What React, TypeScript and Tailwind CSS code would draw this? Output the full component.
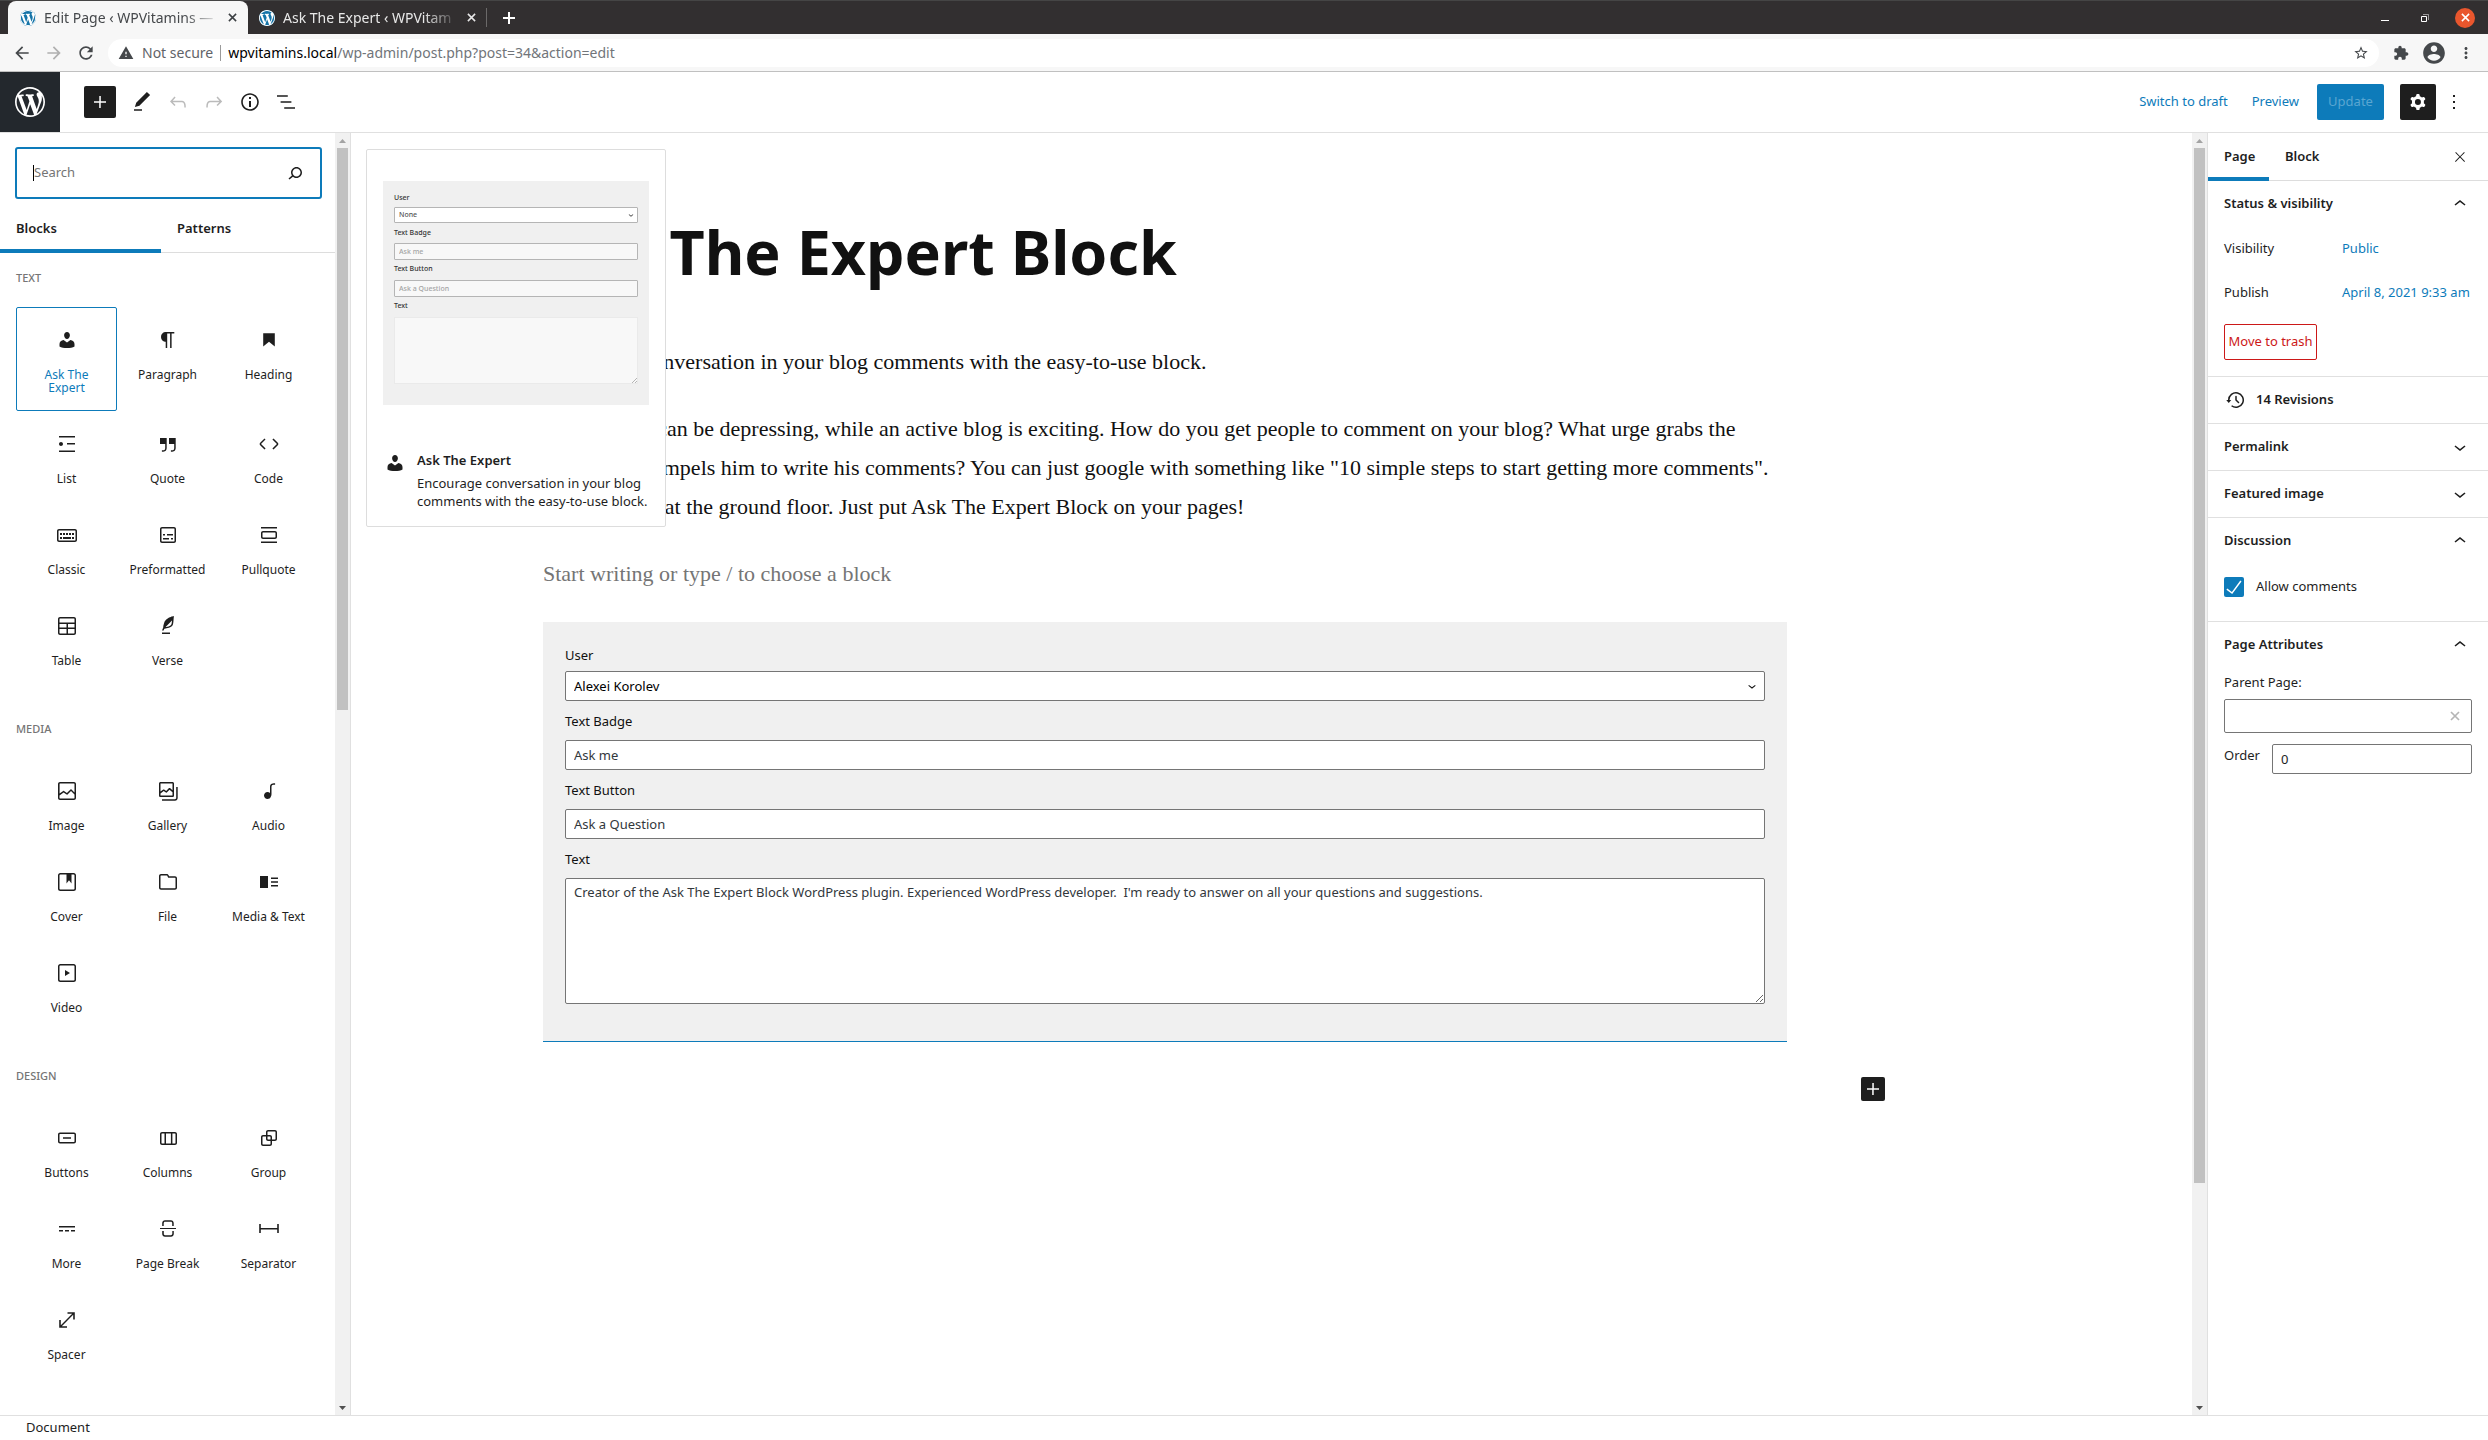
import React from "react";

const ICONS: Record<string, string> = {
  plus: "M18 11.2h-5.2V6h-1.5v5.2H6v1.5h5.2V18h1.5v-5.2H18z",
  edit: "M20.1 5.1L16.9 2 6.2 12.7l-1.3 4.4 4.5-1.3L20.1 5.1zM4 20.8h8v-1.5H4v1.5z",
  undo: "M18.3 11.7c-.6-.6-1.4-.9-2.3-.9H6.7l2.9-3.3-1.1-1-4.5 5L8.5 16l1-1-2.7-2.7H16c.5 0 .9.2 1.3.5 1 1 1 3.4 1 4.5v.3h1.5v-.2c0-1.5 0-4.3-1.5-5.7z",
  redo: "M15.6 6.5l-1.1 1 2.9 3.3H8c-.9 0-1.7.3-2.3.9-1.4 1.5-1.4 4.2-1.4 5.6v.2h1.5v-.3c0-1.1 0-3.5 1-4.5.3-.3.7-.5 1.3-.5h9.2L14.5 15l1.1 1.1 4.6-4.6-4.6-5z",
  info: "M12 3.2c-4.8 0-8.8 3.9-8.8 8.8 0 4.8 3.9 8.8 8.8 8.8 4.8 0 8.8-3.9 8.8-8.8 0-4.8-4-8.8-8.8-8.8zm0 16c-4 0-7.2-3.3-7.2-7.2C4.8 8 8 4.8 12 4.8s7.2 3.3 7.2 7.2c0 4-3.2 7.2-7.2 7.2zM11 17h2v-6h-2v6zm0-8h2V7h-2v2z",
  outline: "M13.8 5.2H3v1.5h10.8V5.2zm-3.6 12v1.5H21v-1.5H10.2zm7.2-6H6.6v1.5h10.8v-1.5z",
  expert: "M12 4c1.7 0 2.9 1.4 2.9 3.2S13.700 11 12 11s-2.900-2-2.900-3.800S10.300 4 12 4zM8.600 12.100L12 14.600l3.400-2.500c2.300.3 4.100 1.900 4.100 4v2.500c-1.700 1-4.500 1.500-7.500 1.500s-5.800-.5-7.500-1.500v-2.500c0-2.100 1.800-3.700 4.100-4z",
  paragraph: "M18.3 4H9.9v-.1l-.9.2c-2.3.4-4 2.4-4 4.800s1.700 4.400 4 4.800l.7.1V20h1.500V5.500h2.900V20h1.500V5.500h2.700V4z",
  heading: "M6.200 5.200v13.400l5.800-4.800 5.800 4.800V5.200z",
  list: "M4 4v1.500h16V4H4zm8 8.500h8V11h-8v1.500zM4 20h16v-1.500H4V20zm4-8c0-1.100-.9-2-2-2s-2 .9-2 2 .9 2 2 2 2-.9 2-2z",
  quote: "M13 6v6h5.200v4c0 .8-.2 1.400-.5 1.700-.6.6-1.600.6-2.500.5h-.3v1.500h.5c1 0 2.300-.1 3.300-1 .6-.6 1-1.600 1-2.800V6H13zm-9 6h5.200v4c0 .8-.2 1.400-.5 1.700-.6.6-1.600.6-2.500.5h-.3v1.500h.5c1 0 2.300-.1 3.300-1 .6-.6 1-1.600 1-2.800V6H4v6z",
  code: "M20.800 10.700l-4.300-4.300-1.100 1.100 4.300 4.300c.1.1.1.3 0 .4l-4.300 4.300 1.100 1.100 4.300-4.300c.7-.8.7-1.900 0-2.600zM4.200 11.800l4.300-4.300-1-1-4.300 4.300c-.7.7-.7 1.800 0 2.500l4.300 4.300 1.100-1.100-4.300-4.300c-.2-.1-.2-.3-.1-.4z",
  classic: "M20 6H4c-1.100 0-2 .9-2 2v9c0 1.100.9 2 2 2h16c1.100 0 2-.9 2-2V8c0-1.100-.9-2-2-2zm.5 11c0 .3-.2.5-.5.5H4c-.3 0-.5-.2-.5-.5V8c0-.3.2-.5.5-.5h16c.3 0 .5.2.5.5v9zM10 10H8v2h2v-2zm-5 2h2v-2H5v2zm8-2h-2v2h2v-2zm-5 6h8v-2H8v2zm6-4h2v-2h-2v2zm3 0h2v-2h-2v2zm0 4h2v-2h-2v2zM5 16h2v-2H5v2z",
  preformatted: "M18 4H6c-1.100 0-2 .9-2 2v12c0 1.100.9 2 2 2h12c1.100 0 2-.9 2-2V6c0-1.100-.9-2-2-2zm.5 14c0 .3-.2.5-.5.5H6c-.3 0-.5-.2-.5-.5V6c0-.3.2-.5.5-.5h12c.3 0 .5.2.5.5v12zM7 16.500h6V15H7v1.500zm4-4h6V11h-6v1.500zM9 11H7v1.500h2V11zm6 5.500h2V15h-2v1.500z",
  pullquote: "M18 8H6c-1.100 0-2 .9-2 2v4c0 1.100.9 2 2 2h12c1.100 0 2-.9 2-2v-4c0-1.100-.9-2-2-2zm.5 6c0 .3-.2.5-.5.5H6c-.3 0-.5-.2-.5-.5v-4c0-.3.2-.5.5-.5h12c.3 0 .5.2.5.5v4zM4 4v1.500h16V4H4zm0 16h16v-1.500H4V20z",
  table: "M19 3H5c-1.100 0-2 .9-2 2v14c0 1.100.9 2 2 2h14c1.100 0 2-.9 2-2V5c0-1.100-.9-2-2-2zM5 4.500h14c.3 0 .5.2.5.5v3.500h-15V5c0-.3.2-.5.5-.5zm8 5.500h6.500v3.500H13V10zm-1.500 3.500h-7V10h7v3.500zm-7 5.500v-4h7v4.500H5c-.3 0-.5-.2-.5-.5zm14.500.5h-6V15h6.500v4c0 .3-.2.5-.5.5z",
  verse: "M17.800 2l-.9.3c-.1 0-3.600 1-5.200 2.100C10 5.500 9.300 6.500 8.900 7.100c-.6.9-1.700 4.700-1.700 6.300l-.9 2.300c-.2.4 0 .8.4 1 .1 0 .2.1.3.1.3 0 .6-.2.7-.5l.6-1.500c.3 0 .7-.1 1.200-.2.7-.1 1.400-.3 2.200-.5.8-.2 1.600-.5 2.400-.8.7-.3 1.400-.7 1.900-1.200s.8-1.200 1-1.900c.2-.7.3-1.600.4-2.400.1-.8.1-1.700.2-2.500 0-.8.1-1.500.2-2.100V2zm-1.900 5.600c-.1.8-.2 1.500-.3 2.100-.2.6-.4 1-.6 1.300-.3.3-.8.6-1.400.9-.7.3-1.400.5-2.200.8-.6.2-1.300.3-1.800.4L15 7.500c.3-.3.6-.7 1-1.100 0 .4 0 .8-.1 1.200zM6 20h8v-1.500H6V20z",
  image: "M19 3H5c-1.100 0-2 .9-2 2v14c0 1.100.9 2 2 2h14c1.100 0 2-.9 2-2V5c0-1.100-.9-2-2-2zM5 4.500h14c.3 0 .5.2.5.5v8.400l-3-2.900c-.3-.3-.8-.3-1 0L11.900 14 9 12c-.3-.2-.6-.2-.8 0l-3.600 2.600V5c-.1-.3.1-.5.4-.5zm14 15H5c-.3 0-.5-.2-.5-.5v-2.400l4.100-3 3 1.900c.3.2.7.2.9-.1L16 12l3.500 3.400V19c0 .3-.2.5-.5.5z",
  gallery: "M20.200 8v11c0 .7-.6 1.200-1.200 1.200H6v1.500h13c1.500 0 2.700-1.200 2.700-2.700V8h-1.500zM16.400 3H4.600C3.700 3 3 3.700 3 4.600v11.800c0 .9.7 1.600 1.600 1.600h11.800c.9 0 1.600-.7 1.600-1.600V4.600c0-.9-.7-1.600-1.600-1.600zM4.600 4.500h11.800l.1.1v6.600l-2.500-2.100c-.3-.3-.7-.3-1 0L10.200 12 8.100 10.600c-.3-.2-.6-.2-.8 0l-2.800 2V4.600l.1-.1zm11.800 12H4.600l-.1-.1v-2l3.200-2.300 2.200 1.500c.3.200.6.2.9-.1l2.700-2.800 3 2.600v3.100l-.1.1z",
  audio: "M17.700 4.300c-1.200 0-2.800 0-3.800 1-.6.6-.9 1.500-.9 2.600V14c-.6-.6-1.500-1-2.500-1C8.600 13 7 14.600 7 16.500S8.600 20 10.500 20c1.500 0 2.800-1 3.300-2.300.5-.8.7-1.800.7-2.500V7.900c0-.7.2-1.200.5-1.600.6-.6 1.800-.6 2.800-.6h.3V4.300h-.4z",
  cover: "M18.700 3H5.300C4 3 3 4 3 5.300v13.400C3 20 4 21 5.300 21h13.400c1.300 0 2.300-1 2.300-2.300V5.300C21 4 20 3 18.700 3zm.8 15.700c0 .4-.4.8-.8.8H5.300c-.4 0-.8-.4-.8-.8V5.300c0-.4.4-.8.8-.8h6.200v8.900l2.500-3.100 2.500 3.100V4.500h2.200c.4 0 .8.4.8.8v13.400z",
  file: "M19 6.200h-5.900l-.6-1.100c-.3-.7-1-1.100-1.800-1.100H5c-1.100 0-2 .9-2 2v11.800c0 1.100.9 2 2 2h14c1.100 0 2-.9 2-2V8.200c0-1.100-.9-2-2-2zm.5 11.600c0 .3-.2.5-.5.5H5c-.3 0-.5-.2-.5-.5V6c0-.3.2-.5.5-.5h5.800c.2 0 .4.1.4.3l1 2H19c.3 0 .5.2.5.5v9.500z",
  mediaText: "M3 18h8V6H3v12zM14 7.500V9h7V7.500h-7zm0 5.300h7v-1.500h-7v1.500zm0 3.700h7V15h-7v1.500z",
  video: "M18.700 3H5.300C4 3 3 4 3 5.300v13.400C3 20 4 21 5.300 21h13.400c1.300 0 2.300-1 2.300-2.300V5.300C21 4 20 3 18.700 3zm.8 15.700c0 .4-.4.8-.8.8H5.300c-.4 0-.8-.4-.8-.8V5.300c0-.4.4-.8.8-.8h13.400c.4 0 .8.4.8.8v13.400zM10 15l5-3-5-3v6z",
  buttons: "M19 6.500H5c-1.100 0-2 .9-2 2v7c0 1.100.9 2 2 2h14c1.100 0 2-.9 2-2v-7c0-1.100-.9-2-2-2zm.5 9c0 .3-.2.5-.5.5H5c-.3 0-.5-.2-.5-.5v-7c0-.3.2-.5.5-.5h14c.3 0 .5.2.5.5v7zM8 12.800h8v-1.500H8v1.500z",
  columns: "M19 6H6c-1.100 0-2 .9-2 2v9c0 1.100.9 2 2 2h13c1.100 0 2-.9 2-2V8c0-1.100-.9-2-2-2zm-4.100 1.500v10H10v-10h4.900zM5.500 17V8c0-.3.2-.5.5-.5h2.500v10H6c-.3 0-.5-.2-.5-.5zm14 0c0 .3-.2.5-.5.5h-2.600v-10H19c.3 0 .5.2.5.5v9z",
  group: "M18 4h-7c-1.100 0-2 .9-2 2v3H6c-1.100 0-2 .9-2 2v7c0 1.100.9 2 2 2h7c1.100 0 2-.9 2-2v-3h3c1.100 0 2-.9 2-2V6c0-1.100-.9-2-2-2zm-4.500 14c0 .3-.2.5-.5.5H6c-.3 0-.5-.2-.5-.5v-7c0-.3.2-.5.5-.5h3V13c0 1.100.9 2 2 2h2.500v3zm0-4.500H11c-.3 0-.5-.2-.5-.5v-2.500H13c.3 0 .5.2.5.5v2.500zm5-.5c0 .3-.2.5-.5.5h-3V11c0-1.100-.9-2-2-2h-2.500V6c0-.3.2-.5.5-.5h7c.3 0 .5.2.5.5v7z",
  more: "M4 9v1.500h16V9H4zm12 5.500h4V13h-4v1.500zm-6 0h4V13h-4v1.500zm-6 0h4V13H4v1.500z",
  pageBreak: "M7.800 6c0-.7.6-1.200 1.200-1.200h6c.7 0 1.200.6 1.200 1.200v3h1.500V6c0-1.500-1.200-2.800-2.800-2.800H9C7.500 3.200 6.200 4.500 6.200 6v3h1.500V6zm8.400 11c0 .7-.6 1.200-1.200 1.200H9c-.7 0-1.200-.6-1.200-1.200v-3H6.200v3c0 1.500 1.200 2.800 2.800 2.800h6c1.500 0 2.800-1.200 2.800-2.800v-3h-1.500v3zM4 11v1h16v-1H4z",
  separator: "M20.200 7v4H3.800V7H2.200v9h1.600v-3.500h16.400V16h1.600V7z",
  spacer: "M12.500 4.200v1.600h4.700L5.800 17.200V12H4.200v7.800h7.800v-1.600H6.800L18.200 6.800v4.700h1.600V4.200z",
  cog: "M10.289 4.836A1 1 0 0111.275 4h1.306a1 1 0 01.987.836l.244 1.466c.787.26 1.503.679 2.108 1.218l1.393-.522a1 1 0 011.216.437l.653 1.130a1 1 0 01-.23 1.273l-1.148.944a6.025 6.025 0 010 2.435l1.149.946a1 1 0 01.23 1.272l-.653 1.130a1 1 0 01-1.216.437l-1.394-.522c-.605.54-1.320.958-2.108 1.218l-.244 1.466a1 1 0 01-.987.836h-1.306a1 1 0 01-.986-.836l-.244-1.466a5.995 5.995 0 01-2.108-1.218l-1.394.522a1 1 0 01-1.217-.436l-.653-1.131a1 1 0 01.23-1.272l1.149-.946a6.026 6.026 0 010-2.435l-1.148-.944a1 1 0 01-.23-1.272l.653-1.131a1 1 0 011.217-.437l1.393.522a5.994 5.994 0 012.108-1.218l.244-1.466zM14.929 12a3 3 0 11-6 0 3 3 0 016 0z",
  moreVertical: "M13 19h-2v-2h2v2zm0-6h-2v-2h2v2zm0-6h-2V5h2v2z",
  search: "M13.500 6C10.500 6 8 8.500 8 11.500c0 1.100.3 2.100.9 3l-3.400 3 1 1.100 3.400-2.900c1 .9 2.200 1.400 3.600 1.400 3 0 5.500-2.500 5.500-5.500C19 8.500 16.500 6 13.500 6zm0 9.500c-2.200 0-4-1.800-4-4s1.800-4 4-4 4 1.800 4 4-1.800 4-4 4z",
  backup: "M5.500 12h1.750l-2.500 3-2.500-3H4a8 8 0 113.134 6.350l.907-1.194A6.500 6.500 0 105.500 12zm9.530 1.970l-2.280-2.280V8.500a.75.75 0 00-1.500 0V12a.747.747 0 00.218.529l2.502 2.502a.75.75 0 101.060-1.061z",
  check: "M18.300 5.600L9.900 16.900l-4.600-3.400-.9 1.200 5.800 4.300 9.300-12.600z",
  up: "M6.500 12.400L12 8l5.500 4.400-.9 1.200L12 10l-4.500 3.600-1-1.200z",
  down: "M17.500 11.600L12 16l-5.500-4.400.9-1.200L12 14l4.500-3.600 1 1.200z",
  close: "M13 11.800l6.100-6.300-1-1-6.100 6.200-6.100-6.200-1 1 6.100 6.300-6.500 6.700 1 1 6.500-6.600 6.500 6.600 1-1z",
  back: "M20 11H7.830l5.590-5.590L12 4l-8 8 8 8 1.410-1.410L7.830 13H20v-2z",
  forward: "M12 4l-1.410 1.410L16.170 11H4v2h12.170l-5.580 5.590L12 20l8-8z",
  reload: "M17.650 6.350C16.200 4.900 14.210 4 12 4c-4.420 0-7.990 3.580-7.990 8s3.570 8 7.990 8c3.730 0 6.840-2.550 7.730-6h-2.080c-.82 2.330-3.040 4-5.650 4-3.310 0-6-2.690-6-6s2.690-6 6-6c1.660 0 3.140.69 4.220 1.780L13 11h7V4l-2.350 2.350z",
  warning: "M1 21h22L12 2 1 21zm12-3h-2v-2h2v2zm0-4h-2v-4h2v4z",
  star: "M22 9.240l-7.190-.62L12 2 9.190 8.630 2 9.240l5.460 4.730L5.820 21 12 17.270 18.180 21l-1.630-7.030L22 9.240zM12 15.400l-3.760 2.270 1-4.280-3.320-2.880 4.380-.38L12 6.100l1.710 4.040 4.380.38-3.320 2.880 1 4.280L12 15.400z",
  puzzle: "M20.500 11H19V7c0-1.100-.9-2-2-2h-4V3.500C13 2.120 11.880 1 10.500 1S8 2.120 8 3.500V5H4c-1.100 0-1.990.9-1.990 2v3.800H3.500c1.490 0 2.700 1.210 2.700 2.700s-1.210 2.700-2.700 2.700H2V20c0 1.100.9 2 2 2h3.800v-1.500c0-1.490 1.210-2.700 2.700-2.700 1.490 0 2.700 1.210 2.700 2.700V22H17c1.100 0 2-.9 2-2v-4h1.500c1.380 0 2.500-1.120 2.500-2.500S21.880 11 20.500 11z",
  account: "M12 2C6.480 2 2 6.480 2 12s4.480 10 10 10 10-4.480 10-10S17.520 2 12 2zm0 3c1.660 0 3 1.340 3 3s-1.340 3-3 3-3-1.340-3-3 1.340-3 3-3zm0 14.200c-2.500 0-4.710-1.280-6-3.220.03-1.990 4-3.080 6-3.080 1.990 0 5.970 1.090 6 3.080-1.290 1.940-3.500 3.220-6 3.220z",
  kebab: "M12 8c1.100 0 2-.9 2-2s-.9-2-2-2-2 .9-2 2 .9 2 2 2zm0 2c-1.100 0-2 .9-2 2s.9 2 2 2 2-.9 2-2-.9-2-2-2zm0 6c-1.100 0-2 .9-2 2s.9 2 2 2 2-.9 2-2-.9-2-2-2z",
};

function Icon({ name, className = "size-6" }: { name: string; className?: string }) {
  return (
    <svg viewBox="0 0 24 24" className={`shrink-0 ${className}`} fill="currentColor" fillRule="evenodd" aria-hidden="true">
      <path d={ICONS[name]} />
    </svg>
  );
}

function Cross({ className }: { className: string }) {
  return (
    <svg viewBox="0 0 10 10" className={`shrink-0 ${className}`} fill="none" stroke="currentColor" strokeWidth="1.7" aria-hidden="true">
      <path d="M1 1l8 8M9 1l-8 8" />
    </svg>
  );
}

function WordPress({ className }: { className: string }) {
  return (
    <svg viewBox="0 0 20 20" className={`shrink-0 ${className}`} fill="currentColor" aria-hidden="true">
      <path d="M20 10c0-5.510-4.490-10-10-10C4.480 0 0 4.490 0 10c0 5.520 4.480 10 10 10 5.510 0 10-4.480 10-10zM7.780 15.370L4.370 6.220c.55-.02 1.170-.08 1.170-.08.5-.06.44-1.130-.06-1.110 0 0-1.450.11-2.370.11-.18 0-.37 0-.58-.01C4.120 2.690 6.870 1.110 10 1.110c2.330 0 4.450.87 6.050 2.340-.68-.11-1.650.39-1.650 1.580 0 .74.45 1.360.9 2.100.35.61.55 1.360.55 2.460 0 1.490-1.400 5-1.400 5l-3.030-8.370c.54-.02.82-.17.82-.17.5-.05.44-1.250-.06-1.220 0 0-1.440.12-2.380.12-.87 0-2.330-.12-2.330-.12-.5-.03-.56 1.200-.06 1.220l.92.08 1.260 3.410zM17.410 10c.24-.64.74-1.870.43-4.250.7 1.290 1.050 2.710 1.050 4.250 0 3.290-1.730 6.240-4.400 7.780.97-2.590 1.940-5.200 2.920-7.780zM6.100 18.090C3.120 16.650 1.110 13.530 1.110 10c0-1.300.23-2.480.72-3.590C3.250 10.300 4.670 14.200 6.100 18.090zm4.030-6.630l2.580 6.980c-.86.29-1.760.45-2.710.45-.79 0-1.570-.11-2.290-.33.81-2.380 1.620-4.740 2.420-7.100z" />
    </svg>
  );
}

function Favicon() {
  return (
    <span className="flex size-4 shrink-0 items-center justify-center rounded-full bg-[#1574a8] text-white">
      <WordPress className="size-4" />
    </span>
  );
}

const tabTitle = "ml-2 w-[176px] whitespace-nowrap [mask-image:linear-gradient(90deg,#000_80%,transparent)]";

function BrowserChrome() {
  return (
    <div className="shrink-0 text-sm">
      <div className="flex h-[34px] items-stretch border-t border-[#454545] bg-[#322f30]">
        <div className="ml-2 flex w-60 items-center rounded-t-lg bg-[#f7f7f7] pr-2 pl-3 text-[#45484b]">
          <Favicon />
          <span className={tabTitle}>Edit Page ‹ WPVitamins —</span>
          <button aria-label="Close tab" className="ml-auto flex size-4 items-center justify-center text-[#3c4043]">
            <Cross className="size-[9px]" />
          </button>
        </div>
        <div className="flex w-[238px] items-center pr-[7px] pl-[11px] text-[#e8e8e8]">
          <Favicon />
          <span className={tabTitle}>Ask The Expert ‹ WPVitam</span>
          <button aria-label="Close tab" className="ml-auto flex size-4 items-center justify-center">
            <Cross className="size-[9px]" />
          </button>
        </div>
        <div className="my-[7px] w-px bg-[#6b6969]" />
        <button aria-label="New tab" className="ml-[15px] flex items-center text-white">
          <svg viewBox="0 0 14 14" className="size-[14px]" stroke="currentColor" strokeWidth="2" aria-hidden="true">
            <path d="M7 1v12M1 7h12" />
          </svg>
        </button>
        <div className="ml-auto flex items-center gap-5 pr-[13px] text-white">
          <button aria-label="Minimize" className="flex size-5 items-center justify-center">
            <svg viewBox="0 0 10 10" className="size-[10px]" fill="none" stroke="currentColor" aria-hidden="true">
              <path d="M1 7.500h8" />
            </svg>
          </button>
          <button aria-label="Restore" className="flex size-5 items-center justify-center">
            <svg viewBox="0 0 10 10" className="size-[10px]" fill="none" stroke="currentColor" aria-hidden="true">
              <path d="M1.500 3.500h5v5h-5z" />
              <path d="M3 1.500h5.500V7" opacity="0.5" />
            </svg>
          </button>
          <button aria-label="Close window" className="flex size-5 items-center justify-center rounded-full bg-[#e9562d]">
            <Cross className="size-[9px]" />
          </button>
        </div>
      </div>
      <div className="flex h-[38px] items-center border-b border-[#c0c0c0] bg-[#f7f7f7] text-[#45484b]">
        <div className="ml-3 flex items-center gap-3">
          <button aria-label="Back"><Icon name="back" className="size-5" /></button>
          <button aria-label="Forward" className="text-[#b0b0b0]"><Icon name="forward" className="size-5" /></button>
          <button aria-label="Reload"><Icon name="reload" className="size-5" /></button>
        </div>
        <div className="ml-3 flex h-7 flex-1 items-center rounded-full bg-white px-2.5">
          <Icon name="warning" className="size-4" />
          <span className="ml-2 text-[#5f6368]">Not secure</span>
          <span className="mx-[7px] h-4 w-px bg-[#9a9a9a]" />
          <span className="text-[#71757a]">
            <span className="text-black">wpvitamins.local</span>/wp-admin/post.php?post=34&amp;action=edit
          </span>
          <button aria-label="Bookmark" className="ml-auto"><Icon name="star" className="size-4" /></button>
        </div>
        <div className="mr-[13px] ml-3 flex items-center gap-2.5">
          <button aria-label="Extensions" className="flex w-5 justify-center"><Icon name="puzzle" className="size-4" /></button>
          <button aria-label="Profile"><Icon name="account" className="size-[26px]" /></button>
          <button aria-label="Menu"><Icon name="kebab" className="size-[18px]" /></button>
        </div>
      </div>
    </div>
  );
}

function EditorHeader() {
  return (
    <header className="flex h-[61px] shrink-0 items-center border-b border-[#e0e0e0] bg-white">
      <a href="#pages" aria-label="View pages" className="flex size-[60px] items-center justify-center bg-[#23282d] text-white">
        <WordPress className="size-[30px]" />
      </a>
      <button aria-label="Add block" className="ml-6 flex size-8 items-center justify-center rounded-[2px] bg-[#1e1e1e] text-white">
        <Icon name="plus" />
      </button>
      <div className="ml-[14px] flex gap-3">
        <button aria-label="Tools"><Icon name="edit" /></button>
        <button aria-label="Undo" className="text-[#bbb]"><Icon name="undo" /></button>
        <button aria-label="Redo" className="text-[#bbb]"><Icon name="redo" /></button>
        <button aria-label="Details"><Icon name="info" /></button>
        <button aria-label="Outline"><Icon name="outline" /></button>
      </div>
      <div className="ml-auto flex items-center pr-[22px] text-[#0d7bba]">
        <button>Switch to draft</button>
        <button className="ml-6">Preview</button>
        <button className="ml-[18px] h-9 w-[67px] rounded-[2px] bg-[#0d7bba] text-[#5aa6d1]">Update</button>
        <button aria-label="Settings" className="ml-4 flex size-9 items-center justify-center rounded-[2px] bg-[#1e1e1e] text-white">
          <Icon name="cog" />
        </button>
        <button aria-label="Options" className="ml-1.5 text-[#1e1e1e]"><Icon name="moreVertical" /></button>
      </div>
    </header>
  );
}

function Scrollbar({ thumb }: { thumb: string }) {
  return (
    <div className="flex w-[15px] shrink-0 flex-col items-center bg-[#f1f1f1]" aria-hidden="true">
      <svg viewBox="0 0 15 15" className="size-[15px] shrink-0 fill-[#a3a3a3]"><path d="M4 10l3.500-4 3.500 4z" /></svg>
      <div className={`w-[11px] bg-[#c1c1c1] ${thumb}`} />
      <svg viewBox="0 0 15 15" className="mt-auto size-[15px] shrink-0 fill-[#505050]"><path d="M4 6l3.500 4L11 6z" /></svg>
    </div>
  );
}

const SECTIONS: { title: string; items: [string, string][] }[] = [
  {
    title: "TEXT",
    items: [
      ["expert", "Ask The Expert"], ["paragraph", "Paragraph"], ["heading", "Heading"],
      ["list", "List"], ["quote", "Quote"], ["code", "Code"],
      ["classic", "Classic"], ["preformatted", "Preformatted"], ["pullquote", "Pullquote"],
      ["table", "Table"], ["verse", "Verse"],
    ],
  },
  {
    title: "MEDIA",
    items: [
      ["image", "Image"], ["gallery", "Gallery"], ["audio", "Audio"],
      ["cover", "Cover"], ["file", "File"], ["mediaText", "Media & Text"],
      ["video", "Video"],
    ],
  },
  {
    title: "DESIGN",
    items: [
      ["buttons", "Buttons"], ["columns", "Columns"], ["group", "Group"],
      ["more", "More"], ["pageBreak", "Page Break"], ["separator", "Separator"],
      ["spacer", "Spacer"],
    ],
  },
];

function Inserter() {
  return (
    <aside className="flex w-[351px] shrink-0 border-r border-[#e0e0e0]">
      <div className="min-w-0 flex-1 overflow-hidden">
        <div className="mx-[15px] mt-[14px] flex h-[52px] w-[307px] items-center rounded-[3px] border-2 border-[#0d7bba] pr-[13px] pl-4">
          <span className="h-4 w-px bg-black" />
          <input aria-label="Search" placeholder="Search" className="min-w-0 flex-1 outline-none placeholder:text-[#757575]" />
          <Icon name="search" />
        </div>
        <div className="mt-[2px] flex h-[52px] border-b border-[#ddd] font-semibold">
          <button className="-mb-px h-[52px] w-[161px] border-b-4 border-[#0d7bba] px-4 pt-2 text-left">Blocks</button>
          <button className="h-12 px-4 pt-2 text-left">Patterns</button>
        </div>
        <div className="px-4 pt-[18px] text-xs">
          {SECTIONS.map((s) => (
            <section key={s.title} className="mb-[38px]">
              <h2 className="mb-[22px] text-[11px] leading-[14px] font-medium text-[#757575]">{s.title}</h2>
              <div className="grid grid-cols-3">
                {s.items.map(([icon, label]) => (
                  <button
                    key={label}
                    className={
                      icon === "expert"
                        ? "flex flex-col items-center self-start rounded-[2px] border border-[#0d7bba] px-2 pt-5 pb-4 text-[#0d7bba]"
                        : "flex flex-col items-center self-start border border-transparent pt-5 pb-4"
                    }
                  >
                    <Icon name={icon} className={icon === "expert" ? "size-6 text-[#1e1e1e]" : "size-6"} />
                    <span className="mt-4 leading-[13px]">{label}</span>
                  </button>
                ))}
              </div>
            </section>
          ))}
        </div>
      </div>
      <Scrollbar thumb="h-[562px]" />
    </aside>
  );
}

const previewField = "w-full rounded-[1px] border border-[#b5b5b5] px-1 text-[7px] placeholder:text-[#a5a5a5]";

function PreviewPopover() {
  return (
    <div className="absolute top-4 left-[15px] w-[300px] rounded-[2px] border border-[#ddd] bg-white px-4 pt-[31px] pb-4">
      <div className="flex flex-col bg-[#f0f0f0] px-[11px] pt-3 pb-[21px] text-[7px] leading-[10px] font-medium text-[#333]">
        <label htmlFor="p-user">User</label>
        <div className="relative mt-1 mb-[5px]">
          <select id="p-user" className={`${previewField} h-4 appearance-none bg-white text-[#555]`}>
            <option>None</option>
          </select>
          <Icon name="down" className="pointer-events-none absolute top-[3px] right-0.5 size-2.5" />
        </div>
        <label htmlFor="p-badge">Text Badge</label>
        <input id="p-badge" placeholder="Ask me" className={`${previewField} mt-[5px] mb-1 h-[17px] bg-[#f8f8f8]`} />
        <label htmlFor="p-button">Text Button</label>
        <input id="p-button" placeholder="Ask a Question" className={`${previewField} mt-1.5 mb-1 h-[17px] bg-[#f8f8f8]`} />
        <label htmlFor="p-text">Text</label>
        <div className="relative mt-1.5 flex">
          <textarea id="p-text" className="h-[67px] w-full resize-none border border-[#eaeaea] bg-[#f8f8f8]" />
          <svg viewBox="0 0 5 5" className="absolute right-px bottom-px size-[5px]" stroke="#888" strokeWidth="0.6" aria-hidden="true">
            <path d="M0 5L5 0M3 5l2-2" />
          </svg>
        </div>
      </div>
      <div className="mt-[46px] flex gap-2.5">
        <Icon name="expert" />
        <div className="min-w-0 flex-1 leading-[18px] whitespace-nowrap">
          <div className="font-semibold">Ask The Expert</div>
          <p className="mt-[5px]">
            Encourage conversation in your blog
            <br />
            comments with the easy-to-use block.
          </p>
        </div>
      </div>
    </div>
  );
}

const field = "w-full rounded-[2px] border border-[#757575] bg-white px-2";

function Canvas() {
  return (
    <main className="relative min-w-0 flex-1 overflow-hidden bg-white">
      <div className="flex flex-col pt-[77px] pr-[405px] pl-48 text-[#111]">
        <h1 className="text-[61px] leading-[84px] font-bold">Ask The Expert Block</h1>
        <div className="mt-12 flex flex-col gap-7 font-['Liberation_Serif',serif] text-[22px] leading-[39px] whitespace-nowrap">
          <p>Encourage conversation in your blog comments with the easy-to-use block.</p>
          <p>
            A quiet blog can be depressing, while an active blog is exciting. How do you get people to comment on your blog? What urge grabs the
            <br />
            visitor and compels him to write his comments? You can just google with something like "10 simple steps to start getting more comments".
            <br />
            You just start at the ground floor. Just put Ask The Expert Block on your pages!
          </p>
          <p className="text-[#757575]">Start writing or type / to choose a block</p>
        </div>
        <div className="mt-[29px] flex flex-col border-b border-[#0d7bba] bg-[#f0f0f0] px-[22px] pt-[23px] pb-[37px] leading-5">
          <label htmlFor="user">User</label>
          <div className="relative mt-1.5 mb-2.5">
            <select id="user" className={`${field} h-[30px] appearance-none text-black`}>
              <option>Alexei Korolev</option>
            </select>
            <Icon name="down" className="pointer-events-none absolute top-[7px] right-[5px] size-4" />
          </div>
          <label htmlFor="badge">Text Badge</label>
          <input id="badge" defaultValue="Ask me" className={`${field} mt-[9px] mb-2.5 h-[30px] text-[#32373c]`} />
          <label htmlFor="button">Text Button</label>
          <input id="button" defaultValue="Ask a Question" className={`${field} mt-[9px] mb-2.5 h-[30px] text-[#32373c]`} />
          <label htmlFor="text">Text</label>
          <textarea
            id="text"
            className={`${field} mt-[9px] h-[126px] resize py-1 leading-[18px] text-[#32373c]`}
            defaultValue="Creator of the Ask The Expert Block WordPress plugin. Experienced WordPress developer.  I'm ready to answer on all your questions and suggestions."
          />
        </div>
      </div>
      <div className="mt-[35px] flex justify-end pr-[307px]">
        <button aria-label="Add block" className="flex size-6 items-center justify-center rounded-[2px] bg-[#1e1e1e] text-white">
          <Icon name="plus" />
        </button>
      </div>
      <PreviewPopover />
    </main>
  );
}

function PanelTitle({ children, open = false }: { children: React.ReactNode; open?: boolean }) {
  return (
    <button className="flex h-[46px] w-full items-center justify-between px-4 text-left font-semibold">
      {children}
      <Icon name={open ? "up" : "down"} />
    </button>
  );
}

function Settings() {
  return (
    <aside className="w-[281px] shrink-0 border-l border-[#e0e0e0] bg-white">
      <div className="flex h-12 border-b border-[#ddd] font-semibold">
        <button className="-mb-px h-12 w-[61px] border-b-4 border-[#0d7bba] pt-1 pl-4 text-left">Page</button>
        <button className="px-4">Block</button>
        <button aria-label="Close settings" className="ml-auto pr-4 pl-2">
          <span className="flex size-6 items-center justify-center"><Icon name="close" className="size-4" /></span>
        </button>
      </div>
      <section className="border-b border-[#e0e0e0] pb-4">
        <PanelTitle open>Status &amp; visibility</PanelTitle>
        <div className="mt-1 flex h-9 items-center pl-4">
          <span className="w-[118px]">Visibility</span>
          <button className="text-[#0d7bba]">Public</button>
        </div>
        <div className="mt-2 flex h-9 items-center pl-4">
          <span className="w-[118px]">Publish</span>
          <button className="text-[#0d7bba]">April 8, 2021 9:33 am</button>
        </div>
        <button className="mt-[13px] ml-4 h-9 w-[93px] rounded-[2px] border border-[#cc1818] whitespace-nowrap text-[#cc1818]">Move to trash</button>
      </section>
      <section className="flex h-[47px] items-center border-b border-[#e0e0e0] pl-4">
        <button className="flex items-center gap-2 font-semibold">
          <Icon name="backup" />
          14 Revisions
        </button>
      </section>
      <section className="border-b border-[#e0e0e0]"><PanelTitle>Permalink</PanelTitle></section>
      <section className="border-b border-[#e0e0e0]"><PanelTitle>Featured image</PanelTitle></section>
      <section className="border-b border-[#e0e0e0] pb-6">
        <PanelTitle open>Discussion</PanelTitle>
        <label className="relative mt-[13px] flex h-5 items-center gap-3 pl-4">
          <input type="checkbox" defaultChecked className="size-5 appearance-none rounded-[2px] bg-[#0d7bba]" />
          <Icon name="check" className="pointer-events-none absolute left-[14px] size-6 text-white" />
          Allow comments
        </label>
      </section>
      <section className="px-4">
        <div className="-mx-4"><PanelTitle open>Page Attributes</PanelTitle></div>
        <label htmlFor="parent" className="mt-1 block leading-5">Parent Page:</label>
        <div className="mt-[7px] flex h-[34px] items-center rounded-[2px] border border-[#757575] pr-[11px] pl-2">
          <input id="parent" className="min-w-0 flex-1 outline-none" />
          <button aria-label="Clear" className="text-[#b5b5b5]"><Cross className="size-[10px]" /></button>
        </div>
        <div className="mt-[11px] flex gap-3">
          <label htmlFor="order" className="w-9 leading-[22px]">Order</label>
          <input id="order" defaultValue="0" className="h-[30px] min-w-0 flex-1 rounded-[2px] border border-[#757575] px-2" />
        </div>
      </section>
    </aside>
  );
}

export default function App() {
  return (
    <div className="flex h-screen flex-col overflow-hidden bg-white font-['Noto_Sans',sans-serif] text-[13px] text-[#1e1e1e]">
      <BrowserChrome />
      <EditorHeader />
      <div className="flex min-h-0 flex-1">
        <Inserter />
        <Canvas />
        <Scrollbar thumb="h-[1035px]" />
        <Settings />
      </div>
      <footer className="flex h-[25px] shrink-0 items-center border-t border-[#e0e0e0] pl-[26px]">Document</footer>
    </div>
  );
}
